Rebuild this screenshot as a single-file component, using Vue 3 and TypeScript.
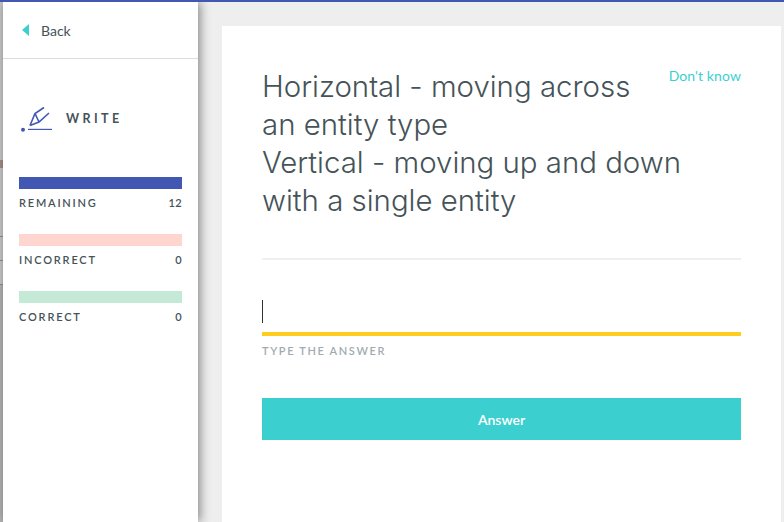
<script setup lang="ts">
const stats = [
  { label: 'REMAINING', value: 12, color: '#4257b2' },
  { label: 'INCORRECT', value: 0, color: '#ffd5cf' },
  { label: 'CORRECT', value: 0, color: '#c4e9d6' },
]
</script>

<template>
  <div class="page">
    <div class="backdrop">
      <i class="spot"></i>
      <i class="line l1"></i><i class="line l2"></i><i class="line l3"></i>
      <i class="low"></i>
    </div>
    <aside class="side">
      <div class="back">
        <span class="tri"></span>
        <span>Back</span>
      </div>
      <div class="mode">
        <svg class="ico" width="36" height="28" viewBox="0 0 36 28" fill="none" stroke="#4257b2">
          <circle cx="5" cy="25.8" r="2" fill="#4257b2" stroke="none" />
          <path d="M10 25.4H34" stroke-width="1.2" />
          <path d="M12 21.5L17 9.5L26 3.5M12 21.5L21 18L31 9M17 9.5L21 18" stroke-width="1.6" />
        </svg>
        <span class="mode-title">WRITE</span>
      </div>
      <div class="stats">
        <div v-for="s in stats" :key="s.label" class="stat">
          <div class="bar" :style="{ background: s.color }"></div>
          <div class="row"><span>{{ s.label }}</span><span class="num">{{ s.value }}</span></div>
        </div>
      </div>
    </aside>
    <main class="main">
      <section class="card">
        <div class="top">
          <h1>Horizontal - moving across<br />an entity type<br />Vertical - moving up and down<br />with a single entity</h1>
          <a class="dk">Don't know</a>
        </div>
        <div class="rule"></div>
        <div class="input"><i class="caret"></i></div>
        <div class="hint">TYPE THE ANSWER</div>
        <button class="btn">Answer</button>
      </section>
    </main>
  </div>
</template>

<style>
html, body { margin: 0; padding: 0; overflow: hidden; }
</style>

<style scoped>
.page {
  position: relative;
  width: 784px;
  height: 522px;
  overflow: hidden;
  background: #eeeeee;
  border-top: 2px solid #4257b2;
  box-sizing: border-box;
  display: flex;
  font-family: "Lato", "Noto Sans", sans-serif;
  color: #455358;
}
.backdrop { width: 3px; flex: none; background: #c9c9c9; position: relative; margin-top: -2px; }
.spot { position: absolute; left: 0; top: 160px; width: 3px; height: 8px; background: #a58f88; }
.line { position: absolute; left: 0; width: 3px; height: 1px; background: #8f8f8f; }
.l1 { top: 236px; }
.l2 { top: 260px; }
.l3 { top: 284px; }
.low { position: absolute; left: 0; top: 285px; bottom: 0; width: 3px; background: #b4b4b4; }
.side {
  width: 195px;
  flex: none;
  background: #fff;
  box-shadow: 2px 0 10px rgba(0, 0, 0, 0.45);
  position: relative;
  z-index: 1;
}
.back {
  height: 57px;
  box-sizing: border-box;
  border-bottom: 1px solid #dcdcdc;
  display: flex;
  align-items: center;
  padding-left: 19px;
  gap: 12px;
  font-size: 14px;
}
.tri {
  width: 0;
  height: 0;
  border-top: 6.5px solid transparent;
  border-bottom: 6.5px solid transparent;
  border-right: 7px solid #3ccfcf;
}
.mode { display: flex; align-items: center; margin-top: 44px; padding-left: 15px; height: 30px; }
.ico { flex: none; }
.mode-title { margin-left: 12px; font-size: 12.5px; font-weight: 700; letter-spacing: 3.4px; margin-top: 1px; }
.stats { margin: 44px 16px 0; display: flex; flex-direction: column; gap: 19px; }
.bar { height: 12px; }
.row {
  display: flex;
  justify-content: space-between;
  margin-top: 7px;
  font-size: 11px;
  line-height: 14px;
  letter-spacing: 1.8px;
  font-weight: 600;
  height: 19px;
}
.num { letter-spacing: 0.4px; }
.main { flex: 1; padding: 24px 0 0 24px; min-width: 0; display: flex; }
.card {
  width: 559px;
  height: 496px;
  box-sizing: border-box;
  background: #fff;
  padding: 41px 40px 0;
}
.top { display: flex; justify-content: space-between; align-items: flex-start; height: 191px; }
h1 {
  flex: 1;
  min-width: 0;
  margin: 1px 0 0;
  font-family: "Inter", "Lato", sans-serif;
  font-size: 29.4px;
  font-weight: 300;
  line-height: 38px;
  color: #455358;
  white-space: nowrap;
}
.dk { flex: none; white-space: nowrap; color: #3ccfcf; font-size: 14px; line-height: 20px; letter-spacing: 0.1px; margin-top: -1px; }
.rule { height: 2px; background: #eeeff0; }
.input { height: 76px; position: relative; box-sizing: border-box; border-bottom: 4px solid #ffcd1f; }
.caret { position: absolute; left: 0; top: 40px; width: 1px; height: 23px; background: #2a3338; }
.hint { margin-top: 8px; font-size: 11px; line-height: 14px; letter-spacing: 1.65px; font-weight: 600; color: #a0abb0; }
.btn {
  display: block;
  width: 100%;
  height: 42px;
  margin-top: 40px;
  border: 0;
  background: #3ccfcf;
  color: #fff;
  font-family: inherit;
  font-size: 14px;
  font-weight: 600;
  padding: 0;
}
</style>
